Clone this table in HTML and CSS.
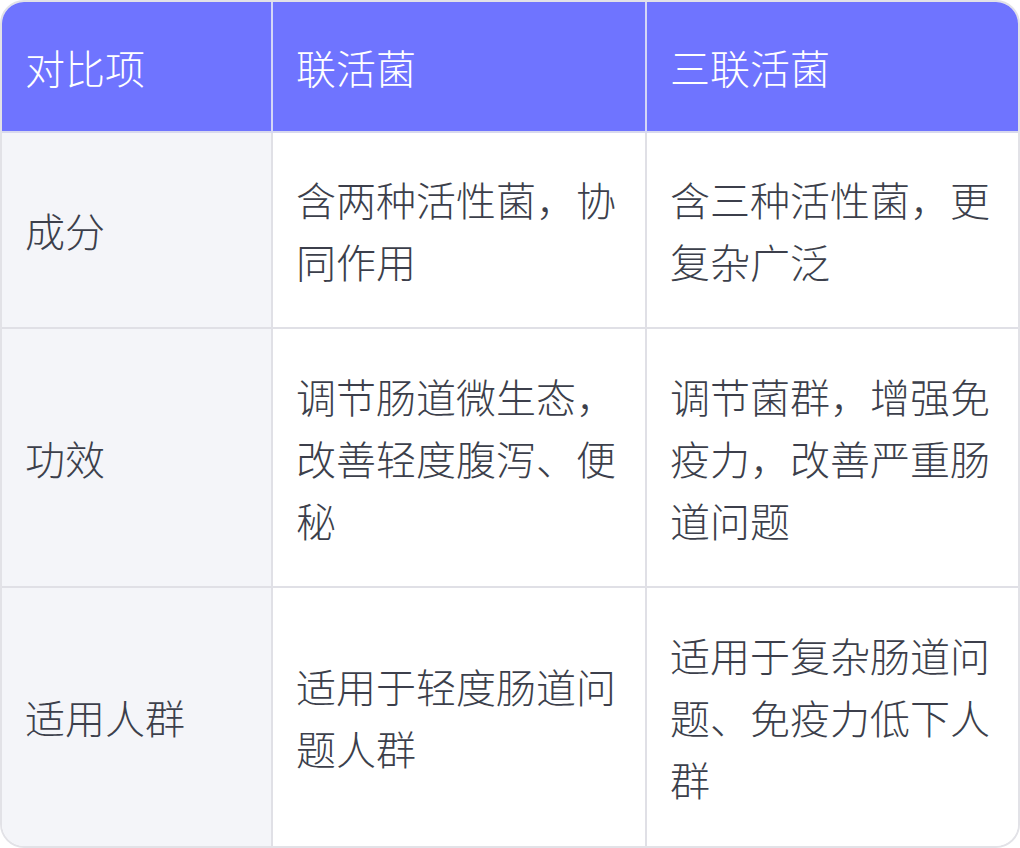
FILE: index.html
```html
<!DOCTYPE html>
<html lang="zh-CN">
<head>
<meta charset="utf-8">
<title>联活菌 vs 三联活菌</title>
<link rel="stylesheet" href="styles.css">
</head>
<body>
<div class="compare">
  <div class="cell head">对比项</div>
  <div class="cell head">联活菌</div>
  <div class="cell head last-col">三联活菌</div>

  <div class="cell label">成分</div>
  <div class="cell">含两种活性菌，协同作用</div>
  <div class="cell last-col">含三种活性菌，更复杂广泛</div>

  <div class="cell label">功效</div>
  <div class="cell">调节肠道微生态，改善轻度腹泻、便秘</div>
  <div class="cell last-col">调节菌群，增强免疫力，改善严重肠道问题</div>

  <div class="cell label last-row">适用人群</div>
  <div class="cell last-row">适用于轻度肠道问题人群</div>
  <div class="cell last-col last-row">适用于复杂肠道问题、免疫力低下人群</div>
</div>
</body>
</html>
```

FILE: styles.css
```css
html, body {
  margin: 0;
  padding: 0;
  background: #ffffff;
}

.compare {
  width: 1020px;
  height: 848px;
  box-sizing: border-box;
  border: 2px solid #e2e2e7;
  border-radius: 24px;
  overflow: hidden;
  display: grid;
  grid-template-columns: 271px 374px 1fr;
  grid-template-rows: 131px 196px 259px 1fr;
  font-family: "Noto Sans CJK SC", "Noto Sans", sans-serif;
  font-size: 40px;
  font-weight: 300;
  line-height: 62px;
  color: #3c3f4b;
}

.cell {
  box-sizing: border-box;
  display: flex;
  align-items: center;
  padding: 0 24px 0 23px;
  border-right: 2px solid #e0e0e6;
  border-bottom: 2px solid #e0e0e6;
  background: #ffffff;
  word-break: break-all;
}

.cell.last-col {
  border-right: none;
}

.cell.last-row {
  border-bottom: none;
}

.cell.head {
  background: #6f74ff;
  color: #ffffff;
  border-right-color: #d4d6f7;
  border-bottom-color: #d8d9ee;
}

.cell.head.last-col {
  border-right: none;
}

.cell.label {
  background: #f4f5f9;
}
```
